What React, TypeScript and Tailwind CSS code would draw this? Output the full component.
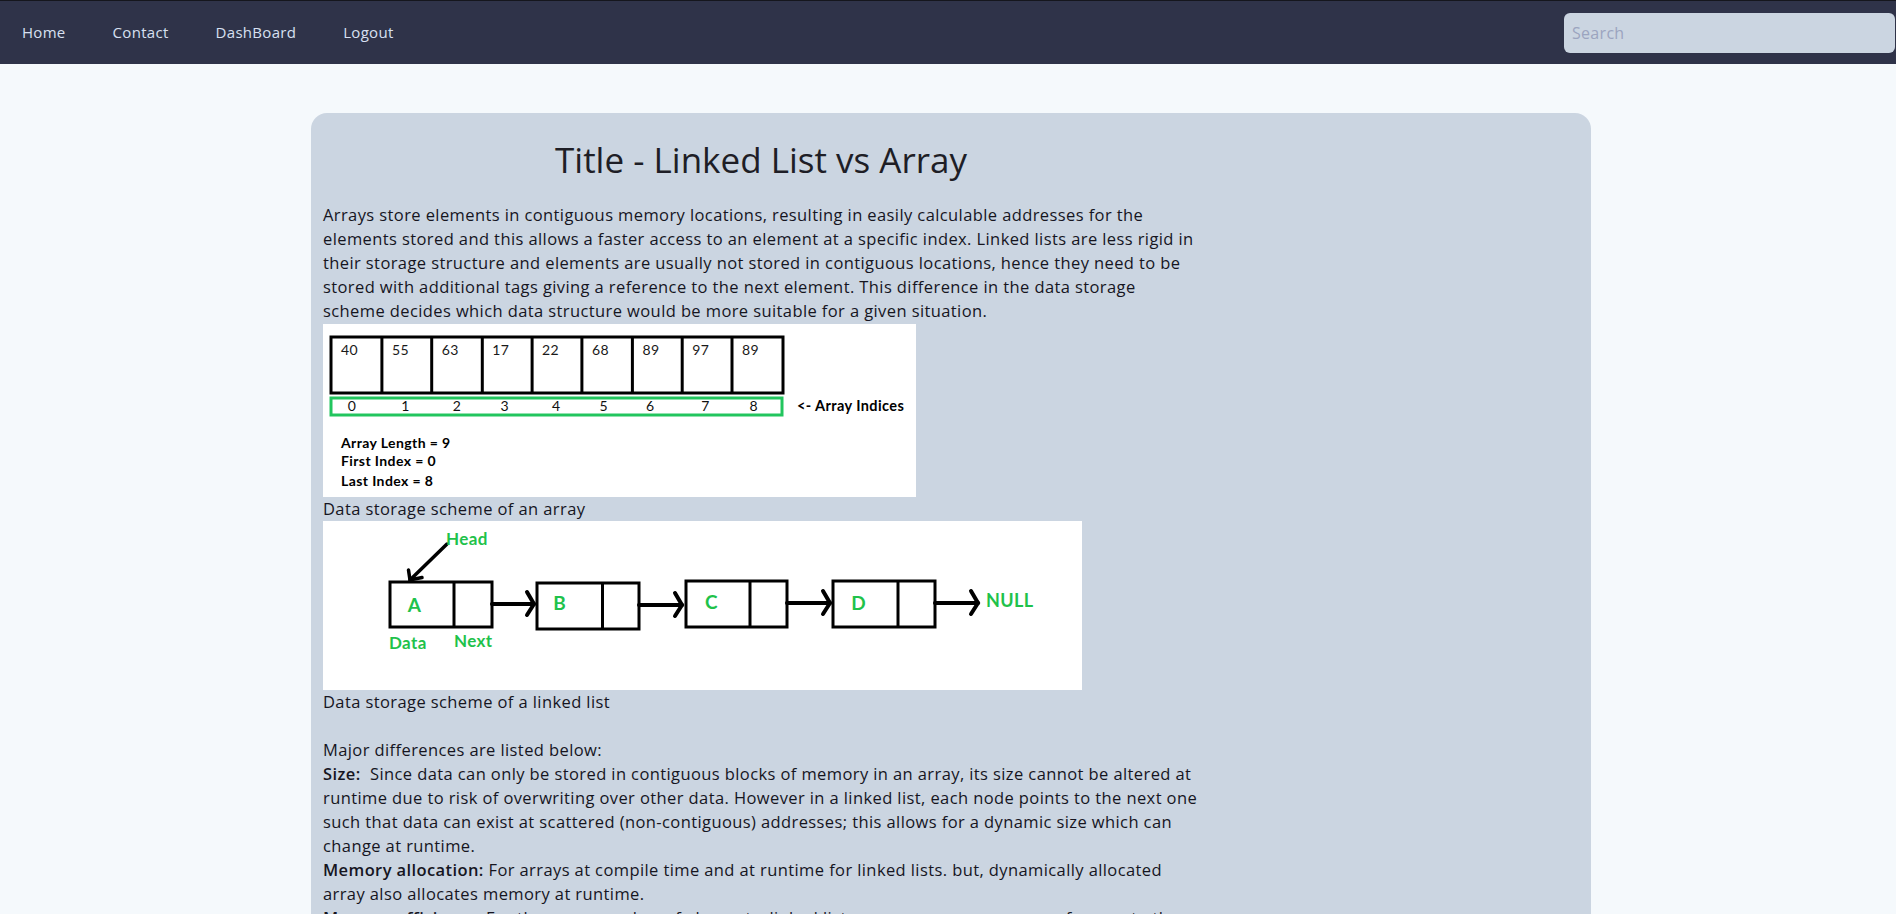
const LINKS = ["Home", "Contact", "DashBoard", "Logout"];

const CELLS = [40, 55, 63, 17, 22, 68, 89, 97, 89];
const CELL_X = [8, 58.9, 108.7, 159.3, 209.1, 258.9, 309.4, 359.2, 409];
const INDEX_X = [29, 82.6, 134, 181.8, 233.2, 280.7, 327.3, 382.6, 430.8];

const GREEN = "#1fc24b";

function ArrayFigure() {
  return (
    <svg width="593" height="173" viewBox="0 0 593 173" className="block">
      <rect width="593" height="173" fill="#fff" />
      <rect x="8" y="13" width="452" height="56" fill="none" stroke="#000" strokeWidth="3" />
      {CELL_X.slice(1).map((x) => (
        <line key={x} x1={x} y1="13" x2={x} y2="69" stroke="#000" strokeWidth="3" />
      ))}
      {CELLS.map((v, i) => (
        <text key={i} x={CELL_X[i] + 10} y="31" fontSize="14" fill="#1a1a1a" fontFamily="Lato, sans-serif">
          {v}
        </text>
      ))}
      <rect x="8" y="74" width="451" height="17" fill="none" stroke="#22c55e" strokeWidth="3" />
      {INDEX_X.map((x, i) => (
        <text key={i} x={x} y="87" textAnchor="middle" fontSize="14" fill="#111" fontFamily="Lato, sans-serif">
          {i}
        </text>
      ))}
      <text x="474" y="87" fontSize="14.5" fontWeight="700" fill="#000" fontFamily="Lato, sans-serif">
        {"<- Array Indices"}
      </text>
      <g fontSize="14" fontWeight="700" fill="#000" fontFamily="Lato, sans-serif">
        <text x="18" y="124">Array Length = 9</text>
        <text x="18" y="142">First Index = 0</text>
        <text x="18" y="162">Last Index = 8</text>
      </g>
    </svg>
  );
}

// nodes: [x, y, w, h, divider, label, labelX, labelY]
const NODES: [number, number, number, number, number, string, number, number][] = [
  [67, 61, 102, 45, 131, "A", 91.5, 84],
  [214, 62, 102, 46, 279.5, "B", 236.7, 82],
  [363, 60, 101, 46, 427, "C", 388.5, 81],
  [510, 60, 102, 46, 575, "D", 535.7, 82],
];
const ARROWS = [
  [169, 211, 83],
  [316, 359, 84],
  [464, 507, 82],
  [612, 655, 82],
];

function ListFigure() {
  return (
    <svg width="759" height="169" viewBox="0 0 759 169" className="block">
      <rect width="759" height="169" fill="#fff" />
      {NODES.map(([x, y, w, h, d, l, lx, ly]) => (
        <g key={l}>
          <rect x={x} y={y} width={w} height={h} fill="none" stroke="#000" strokeWidth="3" />
          <line x1={d} y1={y} x2={d} y2={y + h} stroke="#000" strokeWidth="3" />
          <text x={lx} y={ly + 7} textAnchor="middle" fontSize="19" fontWeight="700" fill={GREEN} fontFamily="Lato, sans-serif">
            {l}
          </text>
        </g>
      ))}
      {ARROWS.map(([a, b, y]) => (
        <g key={a} stroke="#000" strokeWidth="4" fill="none" strokeLinecap="round">
          <line x1={a} y1={y} x2={b} y2={y} />
          <polyline points={`${b - 7},${y - 12} ${b},${y} ${b - 7},${y + 11}`} />
        </g>
      ))}
      <g stroke="#000" strokeWidth="3.5" fill="none" strokeLinecap="round">
        <line x1="124" y1="23" x2="87" y2="59" />
        <polyline points="85.5,49 87,59 99,56.5" />
      </g>
      <g fontWeight="700" fill={GREEN} fontFamily="Lato, sans-serif">
        <text x="663" y="86" fontSize="18">NULL</text>
        <text x="123" y="24" fontSize="17">Head</text>
        <text x="66" y="128" fontSize="17">Data</text>
        <text x="131" y="126" fontSize="17">Next</text>
      </g>
    </svg>
  );
}

export default function App() {
  return (
    <div className="min-h-screen bg-[#f5f9fc] font-['Open_Sans',sans-serif] text-[#16151f]">
      <nav className="h-16 bg-[#2f3349] border-t border-[#15161d] flex items-center">
        <ul className="flex items-center gap-[47px] ml-[22px] text-[15px] tracking-[0.3px] text-[#d8e0f1]">
          {LINKS.map((l) => (
            <li key={l}>
              <a href="#" className="no-underline">{l}</a>
            </li>
          ))}
        </ul>
        <input
          placeholder="Search"
          className="ml-auto mr-px w-[331px] h-10 rounded-md bg-[#cbd5e1] px-2 text-[16px] tracking-[0.3px] placeholder:text-[#9ba4bf] outline-none"
        />
      </nav>

      <main className="pt-[49px]">
        <article className="ml-[311px] w-[1280px] rounded-2xl bg-[#cbd5e1] px-3 pt-[26px] pb-10">
          <div className="w-[876px]">
            <h1 className="text-center text-[35px] leading-[42px] text-[#1e1e26]">Title - Linked List vs Array</h1>
            <div className="mt-[22px] text-[16.5px] leading-6 tracking-[0.4px]">
              <p>
                Arrays store elements in contiguous memory locations, resulting in easily calculable addresses for the
                elements stored and this allows a faster access to an element at a specific index. Linked lists are less
                rigid in their storage structure and elements are usually not stored in contiguous locations, hence they
                need to be stored with additional tags giving a reference to the next element. This difference in the data
                storage scheme decides which data structure would be more suitable for a given situation.
              </p>
              <div className="mt-px">
                <ArrayFigure />
              </div>
              <p>Data storage scheme of an array</p>
              <ListFigure />
              <p>Data storage scheme of a linked list</p>
              <br />
              <p>Major differences are listed below:</p>
              <p>
                <b className="font-semibold">Size:</b>&nbsp; Since data can only be stored in contiguous blocks of memory
                in an array, its size cannot be altered at runtime due to risk of overwriting over other data. However in a
                linked list, each node points to the next one such that data can exist at scattered (non-contiguous)
                addresses; this allows for a dynamic size which can change at runtime.
              </p>
              <p>
                <b className="font-semibold">Memory allocation:</b> For arrays at compile time and at runtime for linked
                lists. but, dynamically allocated array also allocates memory at runtime.
              </p>
              <p>
                <b className="font-semibold">Memory efficiency:</b> For the same number of elements, linked lists use more
                memory as a reference to the next node is also stored along with the data. However, size flexibility in
                linked lists may make them use less memory overall; this is useful when there is uncertainty about size or
                there are large variations in the size of data elements.
              </p>
            </div>
          </div>
        </article>
      </main>
    </div>
  );
}
